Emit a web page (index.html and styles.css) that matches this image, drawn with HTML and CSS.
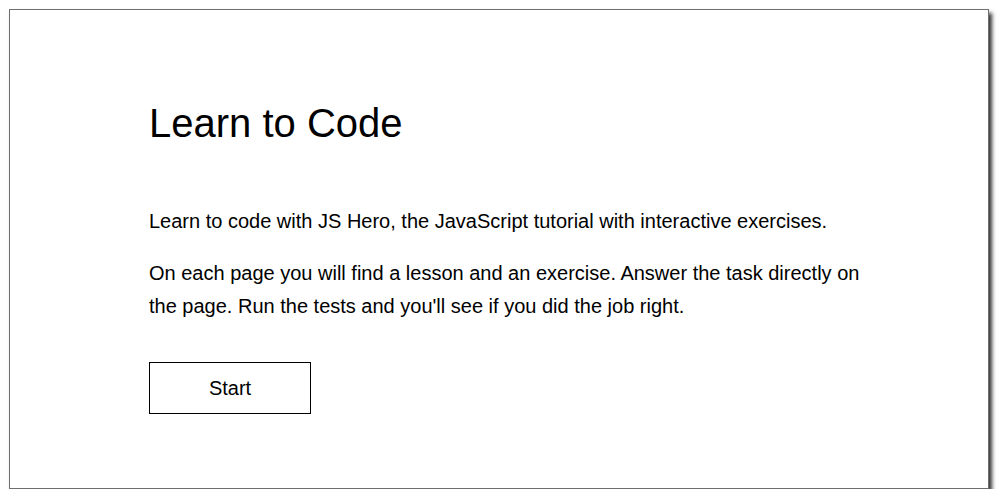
FILE: index.html
```html
<!DOCTYPE html>
<html lang="en">
<head>
<meta charset="utf-8">
<title>Learn to Code</title>
<link rel="stylesheet" href="styles.css">
</head>
<body>
<main class="card">
  <h1 class="title">Learn to Code</h1>
  <p class="text">Learn to code with JS Hero, the JavaScript tutorial with interactive exercises.</p>
  <p class="text">On each page you will find a lesson and an exercise. Answer the task directly on the page. Run the tests and you'll see if you did the job right.</p>
  <button class="start" type="button">Start</button>
</main>
</body>
</html>
```

FILE: styles.css
```css
html, body {
  margin: 0;
  padding: 0;
  background: #ffffff;
}
body {
  font-family: "Liberation Sans", Arial, sans-serif;
  color: #000000;
}
.card {
  box-sizing: border-box;
  margin: 9px 0 0 9px;
  width: 980px;
  height: 480px;
  border: 1px solid #6f6f6f;
  box-shadow: 3px 4px 4px #333333;
  padding: 90px 100px 0 139px;
  display: flex;
  flex-direction: column;
  align-items: flex-start;
}
.title {
  margin: 0 0 59px 0;
  font-size: 40px;
  font-weight: normal;
  line-height: 46px;
}
.text {
  margin: 0 0 19px 0;
  font-size: 20px;
  line-height: 33px;
  max-width: 730px;
}
.text:last-of-type {
  margin-bottom: 39px;
}
.start {
  box-sizing: border-box;
  width: 162px;
  height: 52px;
  background: #ffffff;
  border: 1px solid #000000;
  font-family: "Liberation Sans", Arial, sans-serif;
  font-size: 20px;
  color: #000000;
  padding: 0;
  cursor: pointer;
}
```
